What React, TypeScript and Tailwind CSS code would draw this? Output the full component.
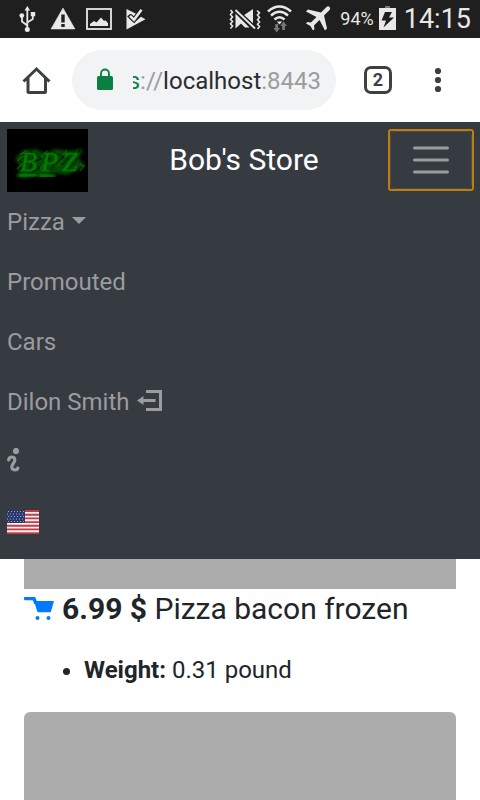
import React from "react";

const FLAG_STARS = [0, 1, 2, 3, 4].flatMap((row) =>
  [0, 1, 2, 3, 4, 5].map((col) => ({ x: 1.5 + col * 3 - (row % 2), y: 1.5 + row * 2.5 }))
);

function StatusBar() {
  return (
    <header className="flex h-[38px] items-center justify-between bg-[#1f1f1f] pl-3.5 pr-[9px] text-[#e8e8e8]">
      <div className="flex items-center gap-2.5">
        <svg className="h-[26px] w-[26px]" viewBox="14 6 26 26" fill="currentColor" aria-label="USB connected">
          <path d="M27.3 6l-2.8 4.5h5.6z" />
          <path d="M27.3 9v21M27.3 25.5l-5.3-4v-6M27.3 22.5l5.5-3.5v-5" fill="none" stroke="currentColor" strokeWidth="1.8" />
          <circle cx="21.8" cy="15.6" r="2.4" />
          <circle cx="27.3" cy="29.5" r="2.5" />
          <path d="M30.8 12h4.4v4.2h-4.4z" />
        </svg>
        <svg className="h-[26px] w-[26px]" viewBox="50 6 26 26" fill="currentColor" aria-label="Warning">
          <path d="M63 8l12 21H51z" stroke="currentColor" strokeWidth="0.5" />
          <path d="M61.3 14.500h3.400v8h-3.400zM61.300 24h3.400v3h-3.400z" fill="#1f1f1f" />
        </svg>
        <svg className="h-[26px] w-[26px]" viewBox="86 6 26 26" fill="currentColor" aria-label="Screenshot saved">
          <rect x="87" y="9" width="24" height="20" fill="none" stroke="currentColor" strokeWidth="1.8" />
          <path d="M90 26v-2l4-3 2.500 1.500 4.500-5 3 3.500 1.500-.8 2.500 3v2.800z" />
        </svg>
        <svg className="h-[26px] w-[26px]" viewBox="122 6 26 26" fill="currentColor" aria-label="Task finished">
          <path d="M126.500 9v20.500l19-10.200-4.500-2.500-7 6-7.500-7z" />
          <path d="M126.500 9l9.500 4.800-2 2.700-3.500-2.700-4 3z" />
          <path d="M130 16l4 3.800 7.500-10" fill="none" stroke="#1f1f1f" strokeWidth="4.600" />
          <path d="M130 15.800l4 4 7.500-10" fill="none" stroke="currentColor" strokeWidth="2.600" />
        </svg>
      </div>
      <div className="flex items-center">
        <svg className="h-[30px] w-8" viewBox="230 4 32 30" fill="currentColor" aria-label="Vibrate">
          <path d="M231.500 10l2 2.300-2 2.300 2 2.300-2 2.300 2 2.300-2 2.300 2 2.300-2 2.300M258 10.500l2.500 2.300-2 2.300 2 2.300-2 2.300 2 2.300-2 2.300 2 2.300-2 2.300" fill="none" stroke="currentColor" strokeWidth="1.600" />
          <path d="M236.500 13.500l14 14h-4.500l-4-4-5.500 5zM244.500 15.500l9.500-6.500v14.500z" />
          <path d="M237 10.500l19 18" stroke="#1f1f1f" strokeWidth="4.500" />
          <path d="M236.500 10l19.500 18.500" stroke="currentColor" strokeWidth="1.800" />
        </svg>
        <svg className="ml-[5px] h-[30px] w-[26px]" viewBox="266 4 26 30" fill="none" stroke="currentColor" strokeWidth="2.600" aria-label="Wi-Fi">
          <path d="M268 11.500q11.500-10 23 0M271 15.500q8.500-7.500 17 0M274.500 19.500q5-4.500 10 0" />
          <path d="M276.800 21.500h5.400l-2.700 3z" fill="currentColor" stroke="none" />
          <path d="M275.300 24h2.800v4h1.900l-3.300 4.500-3.300-4.500h1.900zM282.200 30v-4h-1.900l3.300-4.500 3.300 4.500H285v4z" fill="#777" stroke="none" />
        </svg>
        <svg className="ml-[13px] h-[30px] w-[27px]" viewBox="305 4 27 30" fill="currentColor" aria-label="Airplane mode">
          <path transform="translate(319.500 17) rotate(45) scale(1.420) translate(-11.500 -12)" d="M21 16v-2l-8-5V3.500c0-.83-.67-1.500-1.500-1.500S10 2.670 10 3.500V9l-8 5v2l8-2.500V19l-2 1.500V22l3.500-1 3.500 1v-1.500L13 19v-5.500l8 2.500z" />
        </svg>
        <span className="ml-2 text-lg leading-6">94%</span>
        <svg className="ml-[5px] h-[26px] w-[17px]" viewBox="378 6 17 26" fill="currentColor" aria-label="Charging">
          <path d="M384 6h5v2h-5z" fill="#777" />
          <path d="M378 8h17v22h-17z" />
          <path d="M384 12h7l-3 5.500h5l-10.500 10 2.500-7h-4.500z" fill="#1f1f1f" />
        </svg>
        <time className="ml-2 text-[27px] leading-8">14:15</time>
      </div>
    </header>
  );
}

function BrowserBar() {
  return (
    <div className="flex h-[84px] items-center bg-white pl-[22px] pr-7 text-[#3c4043]">
      <button type="button" aria-label="Home">
        <svg className="h-[30px] w-[30px]" viewBox="22 65 30 30" fill="none" stroke="currentColor" strokeWidth="3">
          <path d="M23.500 81.500l13-12.500 13 12.500M28 78v13.500q0 1 1 1h15.500q1 0 1-1V78" />
        </svg>
      </button>
      <button type="button" aria-label="Address" className="ml-5 flex h-[60px] min-w-0 flex-1 items-center rounded-full bg-[#f1f3f4] pl-6 pr-[15px] text-2xl">
        <svg className="h-6 w-[18px] shrink-0" viewBox="96 68 18 24" fill="#0b8043">
          <rect x="97" y="76" width="16" height="14" rx="1.500" />
          <path d="M101 77v-3.500a4 4 0 0 1 8 0V77" fill="none" stroke="#0b8043" strokeWidth="1.900" />
        </svg>
        <span className="ml-[19px] flex min-w-0 flex-1 justify-end overflow-hidden pt-0.5 whitespace-nowrap text-[#9a9c9e]">
          <span className="text-[#0b8043]">s</span>://
          <span className="text-[#2b2d30]">localhost</span>:8443
        </span>
      </button>
      <button type="button" aria-label="Open tabs" className="ml-7 flex h-7 w-7 items-center justify-center rounded-[7px] border-3 border-[#3c4043] text-lg leading-4 font-bold">
        2
      </button>
      <button type="button" aria-label="Browser menu" className="ml-8">
        <svg className="h-7 w-7" viewBox="424 66 28 28" fill="currentColor">
          <circle cx="438" cy="71" r="3.100" />
          <circle cx="438" cy="80" r="3.100" />
          <circle cx="438" cy="89" r="3.100" />
        </svg>
      </button>
    </div>
  );
}

function Logo() {
  return (
    <svg className="h-[63px] w-[81px] bg-black" viewBox="0 0 81 63" aria-label="BPZ">
      <defs>
        <filter id="glow" x="-20%" y="-40%" width="140%" height="180%">
          <feGaussianBlur stdDeviation="1.800" />
        </filter>
      </defs>
      <path d="M8 30l7-8 14-2 8 4 12-4 12 2 15-2-4 10 6 6-10 6-8 4-14-2-10 4-8-2-10 3-9-1 5-10z" fill="#005c00" opacity="0.800" filter="url(#glow)" />
      <path d="M21 20l-7 5 7 1-9 6 8 2-7 6M24 22q5 9-2 18M28 24l6 6-8 3 7 6-8 4M43 21l-6 6 6 2-5 6M47 22q4 9-3 19M50 25l7 3-8 6M73 21l-17 19M68 22l-13 14M75 25l-14 16" fill="none" stroke="#000" strokeWidth="1" opacity="0.800" />
      <path d="M12 46h18M32 47h16" stroke="#008a00" strokeWidth="4" opacity="0.900" filter="url(#glow)" />
      <text x="13 34 55" y="42" fontFamily="Liberation Serif, serif" fontSize="28" fontStyle="italic" fill="#007d00" stroke="#007000" strokeWidth="0.600">BPZ</text>
      <path d="M20 21l-7 5M16 27l-5 5M15 35l-5 5M40 22l-5 6M38 34l-5 6M73 35l4 2-4 5M50 38l5-7M60 21l-4 5" fill="none" stroke="#006c00" strokeWidth="1.200" />
    </svg>
  );
}

function Navbar() {
  const link = "flex h-[60px] items-center";
  return (
    <nav className="bg-[#363a41] px-[7px] pt-[7px] pb-[7px] text-2xl text-[#9a9c9f]">
      <div className="flex h-[63px] items-start justify-between">
        <a href="#home"><Logo /></a>
        <a href="#store" className="ml-3 text-3xl leading-[62px] text-white">Bob's Store</a>
        <button type="button" aria-label="Toggle navigation" aria-expanded="true" className="-mr-px flex h-[62px] w-[86px] items-center justify-center rounded-[3px] border-2 border-[#c17d0b]">
          <span className="flex h-full w-full items-center justify-center rounded-md border border-[#484c53]">
            <svg className="h-[30px] w-9" viewBox="0 0 36 30" stroke="currentColor" strokeWidth="3" strokeLinecap="round">
              <path d="M1.500 3h33M1.500 15h33M1.500 27h33" />
            </svg>
          </span>
        </button>
      </div>
      <ul>
        <li>
          <button type="button" aria-haspopup="true" className={link}>
            Pizza
            <svg className="mb-1 ml-[7px] h-[7px] w-3.5" viewBox="0 0 14 7" fill="currentColor"><path d="M0 0h14L7 7z" /></svg>
          </button>
        </li>
        <li><a href="#promouted" className={link}>Promouted</a></li>
        <li><a href="#cars" className={link}>Cars</a></li>
        <li>
          <a href="#logout" className={link}>
            Dilon Smith
            <svg className="mb-0.5 ml-[7px] h-[22px] w-[25px]" viewBox="137 390 25 22" fill="none" stroke="currentColor" strokeWidth="3">
              <path d="M146 391.500h14.500v18H146M142 400.500h13.500" />
              <path d="M137 400.500l6.500-4.500v9z" fill="currentColor" stroke="none" />
            </svg>
          </a>
        </li>
        <li>
          <a href="#info" aria-label="Information" className={link}>
            <svg className="mb-1 h-6 w-[13px]" viewBox="7 447 13 24" fill="none" stroke="currentColor" strokeWidth="3.200" strokeLinecap="round">
              <circle cx="16" cy="450" r="3.100" fill="currentColor" stroke="none" />
              <path d="M8.600 459c.5-4 6.500-4 6.200 0-.2 3-3 4.500-3 7 .2 4 5.500 3.500 6 1" />
            </svg>
          </a>
        </li>
        <li>
          <button type="button" aria-label="Language: English" className={link}>
            <svg className="h-6 w-8" viewBox="0 0 32 24">
              <path d="M0 0h32v24H0z" fill="#f3f0f1" />
              <path d="M0 1h32M0 4.700h32M0 8.400h32M0 12.100h32M0 15.700h32M0 19.400h32M0 23.100h32" stroke="#c33c47" strokeWidth="1.850" />
              <path d="M0 0h18v13H0z" fill="#29396d" />
              {FLAG_STARS.map((s) => (
                <circle key={`${s.x}-${s.y}`} cx={s.x} cy={s.y} r="0.600" fill="#aeb8d2" />
              ))}
            </svg>
          </button>
        </li>
      </ul>
    </nav>
  );
}

export default function App() {
  return (
    <div className="flex min-h-screen flex-col bg-white font-[Roboto,sans-serif] text-[#212529]">
      <StatusBar />
      <BrowserBar />
      <Navbar />
      <main className="flex flex-1 flex-col px-6">
        <div className="h-[30px] bg-[#acacac]" />
        <h2 className="mt-0.5 mb-[25px] flex h-9 items-center text-3xl">
          <a href="#cart" aria-label="Add to cart" className="mr-2">
            <svg className="h-6 w-[30px]" viewBox="24 597 30 24" fill="#007bff">
              <path d="M25.500 598.600h8.500l1.500 4" fill="none" stroke="#007bff" strokeWidth="3.400" strokeLinecap="round" strokeLinejoin="round" />
              <path d="M34 601h20l-3 10.500q-.3.800-1 .8H38.500q-.8 0-1.200-.8z" />
              <circle cx="37.500" cy="618" r="2" />
              <circle cx="48.500" cy="618" r="2" />
            </svg>
          </a>
          <span><strong className="font-bold">6.99 $</strong> Pizza bacon frozen</span>
        </h2>
        <ul className="mb-6 list-disc pl-[60px] text-2xl leading-9">
          <li><strong className="font-bold">Weight:</strong> 0.31 pound</li>
        </ul>
        <div className="flex-1 rounded-t-md bg-[#acacac]" />
      </main>
    </div>
  );
}
